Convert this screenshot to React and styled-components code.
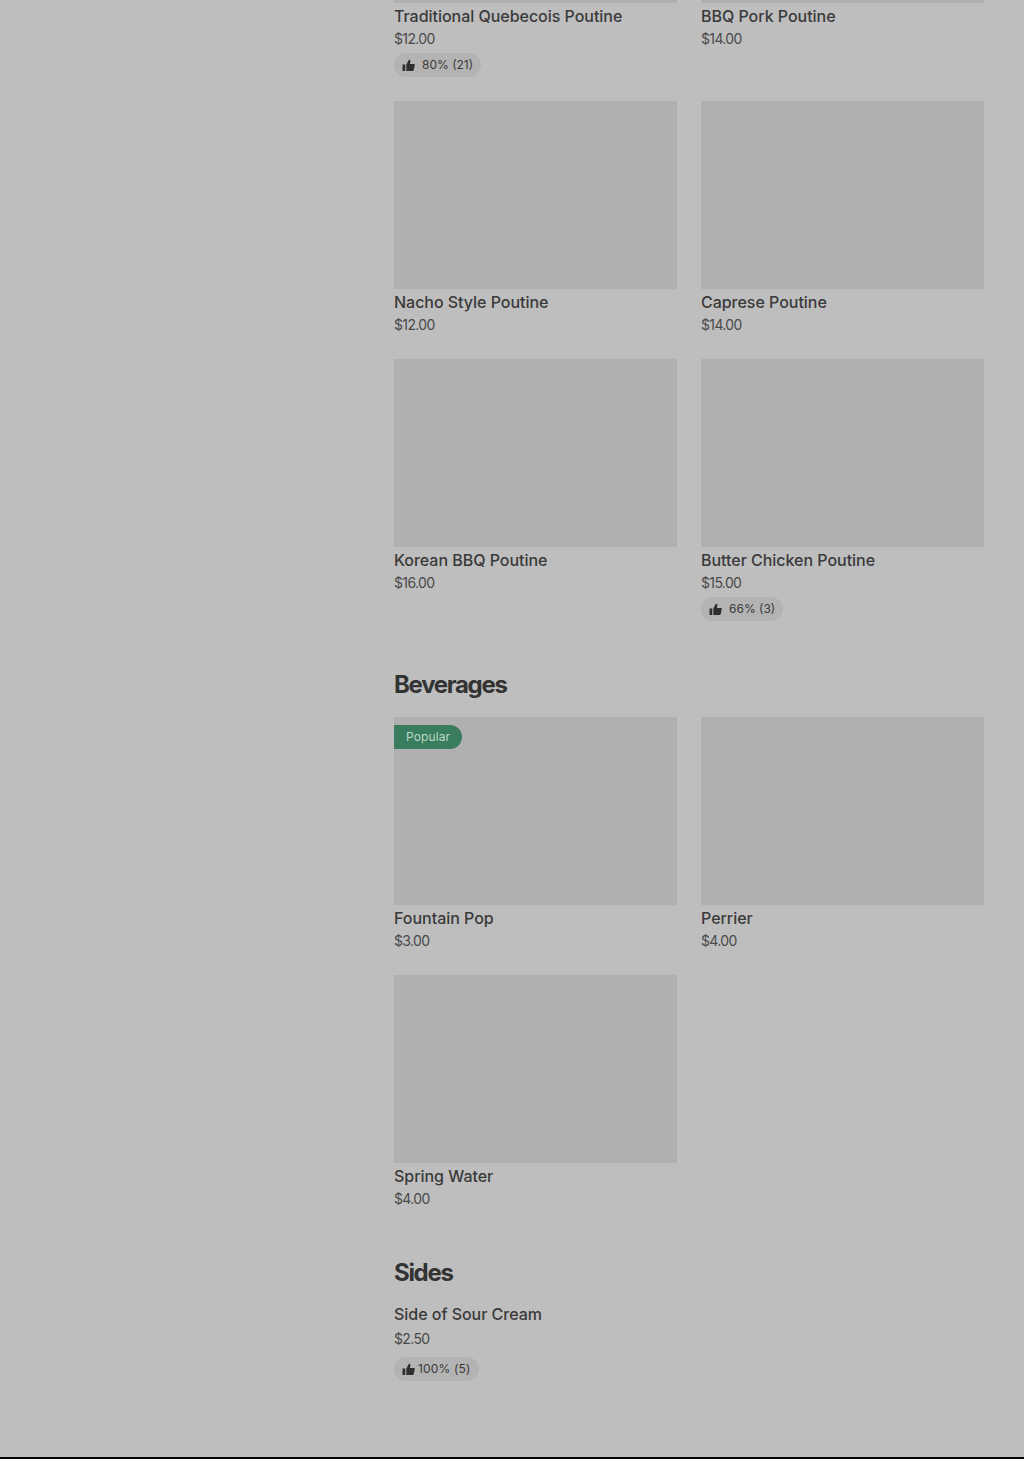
import React from "react";
import styled, {createGlobalStyle} from "styled-components";

const GlobalStyle = createGlobalStyle`
  html, body {
    margin: 0;
    padding: 0;
    background: #bebebe;
  }
`;

const Page = styled.div`
  width: 1024px;
  height: 1459px;
  overflow: hidden;
  display: flex;
  flex-direction: column;
  background: #bebebe;
  font-family: Inter, "Liberation Sans", sans-serif;
  color: #333333;
`;

const Menu = styled.main`
  flex: 1;
  padding: 0 40px 0 394px;
`;

const Section = styled.section`
  margin-bottom: ${(p) => p.$gap || 0}px;
`;

const SectionTitle = styled.h2`
  margin: 0 0 ${(p) => p.$gap || 18}px;
  font-size: 24px;
  line-height: 28px;
  font-weight: 700;
  letter-spacing: -1.3px;
  color: #333333;
`;

const Grid = styled.div`
  display: grid;
  grid-template-columns: 283px 283px;
  column-gap: 24px;
  row-gap: 24px;
`;

const Card = styled.article`
  display: flex;
  flex-direction: column;
  align-items: flex-start;
  min-width: 0;
`;

const Photo = styled.div`
  position: relative;
  width: 283px;
  height: ${(p) => p.$height || 188}px;
  background: #b0b0b0;
`;

const Badge = styled.span`
  position: absolute;
  top: 8px;
  left: 0;
  box-sizing: border-box;
  height: 24px;
  padding: 0 12px 1px;
  display: flex;
  align-items: center;
  font-size: 12px;
  letter-spacing: 0.1px;
  color: #b9d8c6;
  background: #3a7d5e;
  border-radius: 0 12px 12px 0;
`;

const Name = styled.h3`
  margin: 0;
  font-size: 16px;
  line-height: 26px;
  font-weight: 500;
  letter-spacing: -0.03px;
  color: #3a3a3a;
`;

const Price = styled.div`
  font-size: 14px;
  line-height: 20px;
  letter-spacing: -0.65px;
  color: #4a4a4a;
`;

const Rating = styled.div`
  margin-top: 4px;
  height: 24px;
  padding: 0 8px;
  display: flex;
  align-items: center;
  gap: ${(p) => p.$gap}px;
  font-size: 12px;
  color: #3a3a3a;
  background: #b3b3b3;
  border-radius: 12px;
`;

const RatingText = styled.span`
  margin-bottom: 1px;
`;

const SideCard = styled(Card)`
  ${Price} {
    margin-top: 2px;
  }

  ${Rating} {
    margin-top: 8px;
    padding-right: 9px;
    letter-spacing: 0.15px;
  }
`;

const Thumb = styled.svg`
  width: 13px;
  height: 13px;
  flex: none;
  fill: #2e2e2e;
`;

const Bottom = styled.footer`
  height: 2px;
  background: #000000;
`;

const ThumbIcon = () => (
  <Thumb viewBox="0 0 24 24" aria-hidden="true">
    <path d="M1 10h5v12H1zM8 22V10l5-9 1.5.8c1 .6 1.4 1.7 1.1 2.8L14.6 9H22c1 0 1.8 1 1.6 2l-2 9.4c-.2 1-1 1.6-2 1.6z" />
  </Thumb>
);

const Item = ({name, price, rating, popular, photoHeight = 188}) => (
  <Card>
    <Photo $height={photoHeight}>{popular && <Badge>Popular</Badge>}</Photo>
    <Name>{name}</Name>
    <Price>{price}</Price>
    {rating && (
      <Rating $gap={7}>
        <ThumbIcon />
        <RatingText>{rating}</RatingText>
      </Rating>
    )}
  </Card>
);

const App = () => (
  <Page>
    <GlobalStyle />
    <Menu>
      <Section $gap={50}>
        <Grid>
          <Item name="Traditional Quebecois Poutine" price="$12.00" rating="80% (21)" photoHeight={3} />
          <Item name="BBQ Pork Poutine" price="$14.00" photoHeight={3} />
          <Item name="Nacho Style Poutine" price="$12.00" />
          <Item name="Caprese Poutine" price="$14.00" />
          <Item name="Korean BBQ Poutine" price="$16.00" />
          <Item name="Butter Chicken Poutine" price="$15.00" rating="66% (3)" />
        </Grid>
      </Section>
      <Section $gap={50}>
        <SectionTitle>Beverages</SectionTitle>
        <Grid>
          <Item name="Fountain Pop" price="$3.00" popular />
          <Item name="Perrier" price="$4.00" />
          <Item name="Spring Water" price="$4.00" />
        </Grid>
      </Section>
      <Section>
        <SectionTitle $gap={14}>Sides</SectionTitle>
        <SideCard>
          <Name>Side of Sour Cream</Name>
          <Price>$2.50</Price>
          <Rating $gap={3}>
            <ThumbIcon />
            <RatingText>100% (5)</RatingText>
          </Rating>
        </SideCard>
      </Section>
    </Menu>
    <Bottom />
  </Page>
);

export default App;
